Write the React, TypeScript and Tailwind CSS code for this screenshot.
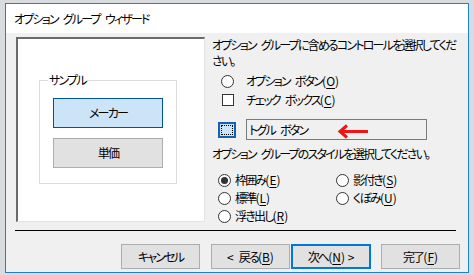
import React from 'react';

const font = "font-['Noto_Sans_CJK_JP','Noto_Sans',sans-serif] [font-feature-settings:'palt'] tracking-[-1.8px]";

// Japanese text: proportional kana are tight, so spaces get a fixed gap
function T({ s }: { s: string }) {
  const parts = s.split(' ');
  return (
    <>
      {parts.map((p, i) => (
        <React.Fragment key={i}>
          {i > 0 && <span className="inline-block w-[5px]" />}
          {p}
        </React.Fragment>
      ))}
    </>
  );
}

function Radio({ checked = false }: { checked?: boolean }) {
  return (
    <span className="w-[13px] h-[13px] rounded-full border border-[#333333] bg-white flex items-center justify-center shrink-0">
      {checked && <span className="w-[7px] h-[7px] rounded-full bg-[#333333]" />}
    </span>
  );
}

function Key({ label, k }: { label: string; k: string }) {
  return (
    <span className="whitespace-nowrap">
      <T s={label} />
      <span className="tracking-normal">
        (<span className="underline underline-offset-2">{k}</span>)
      </span>
    </span>
  );
}

function Button({ children, primary = false, className = '' }: { children: React.ReactNode; primary?: boolean; className?: string }) {
  return (
    <button
      className={
        'w-[79px] h-[25px] bg-[#e1e1e1] flex items-center justify-center leading-none whitespace-nowrap ' +
        (primary ? 'border-2 border-[#0078d7] ' : 'border border-[#adadad] ') +
        className
      }
    >
      {children}
    </button>
  );
}

function StyleOption({ label, k, checked = false }: { label: string; k: string; checked?: boolean }) {
  return (
    <div className="h-[18px] flex items-center gap-[4px]">
      <Radio checked={checked} />
      <Key label={label} k={k} />
    </div>
  );
}

export default function App() {
  return (
    <div className={`w-[474px] h-[275px] bg-[#d9dcdf] pt-[3px] pl-[5px] overflow-hidden text-[12px] text-black ${font}`}>
      <div className="w-[464px] h-[270px] border border-[#1883d7] bg-[#f0f0f0] flex flex-col">
        {/* title */}
        <div className="h-[29px] bg-white flex items-center pl-[8px] shrink-0 whitespace-nowrap">
          <T s="オプション グループ ウィザード" />
        </div>

        <div className="flex pl-[10px] pt-[4px]">
          {/* sample preview */}
          <div className="w-[189px] h-[185px] shrink-0 border-t-2 border-l-2 border-t-[#6b6b6b] border-l-[#6b6b6b] border-b border-r border-b-[#e3e3e3] border-r-[#e3e3e3] bg-white pt-[41px] pl-[21px]">
            <div className="relative w-[138px] h-[104px] border border-[#dcdcdc] pt-[17px] pl-[13px] flex flex-col gap-[10px]">
              <span className="absolute left-[8px] top-[-9px] bg-white px-[1px] leading-[16px]">サンプル</span>
              <div className="w-[110px] h-[30px] bg-[#cce4f7] border border-[#005499] flex items-center justify-center">メーカー</div>
              <div className="w-[110px] h-[30px] bg-[#e1e1e1] border border-[#adadad] flex items-center justify-center">単価</div>
            </div>
          </div>

          {/* options */}
          <div className="relative w-[245px] ml-[7px] whitespace-nowrap">
            <p className="leading-[16px]">
              <T s="オプション グループに含めるコントロールを選択してくだ" />
              <br />
              さい。
            </p>
            <div className="h-[20px] mt-[2px] flex items-center pl-[9px]">
              <Radio />
              <span className="ml-[12px]">
                <Key label="オプション ボタン" k="O" />
              </span>
            </div>
            <div className="h-[18px] flex items-center pl-[10px]">
              <span className="w-[12px] h-[12px] border border-[#333333] bg-white shrink-0" />
              <span className="ml-[12px]">
                <Key label="チェック ボックス" k="C" />
              </span>
            </div>
            <div className="h-[21px] mt-[10px] flex items-center pl-[6px]">
              <span className="w-[18px] h-[16px] border-2 border-[#1560b0] bg-[#cce4f7] p-px shrink-0">
                <span className="block w-full h-full border border-dotted border-black" />
              </span>
              <div className="ml-[10px] w-[181px] h-[21px] border border-[#7a7a7a] flex items-center pl-[2px]">
                <T s="トグル ボタン" />
              </div>
            </div>
            <p className="leading-[16px] mt-[6px]">
              <T s="オプション グループのスタイルを選択してください。" />
            </p>
            <div className="mt-[9px] pl-[6px] grid grid-cols-[118px_1fr]">
              <StyleOption label="枠囲み" k="E" checked />
              <StyleOption label="影付き" k="S" />
              <StyleOption label="標準" k="L" />
              <StyleOption label="くぼみ" k="U" />
              <StyleOption label="浮き出し" k="R" />
            </div>

            <svg className="absolute left-[125px] top-[87px]" width="32" height="15" viewBox="0 0 32 15">
              <path d="M31 7.5 H4" stroke="#f01414" strokeWidth="3" fill="none" />
              <path d="M10 1.5 L3 7.5 L10 13.5" stroke="#f01414" strokeWidth="3" fill="none" strokeLinejoin="miter" />
            </svg>
          </div>
        </div>

        <div className="ml-[9px] mt-[5px] w-[441px] h-px bg-black" />

        <div className="flex mt-[13px] pl-[115px]">
          <Button>キャンセル</Button>
          <Button className="ml-[11px]">
            <span className="tracking-normal">&lt;</span>
            <span className="inline-block w-[5px]" />
            <Key label="戻る" k="B" />
          </Button>
          <Button primary className="ml-px w-[80px]">
            <span>次へ</span>
            <span className="tracking-normal">
              (<span className="underline underline-offset-2">N</span>) &gt;
            </span>
          </Button>
          <Button className="ml-[10px]">
            <Key label="完了" k="F" />
          </Button>
        </div>
      </div>
    </div>
  );
}
